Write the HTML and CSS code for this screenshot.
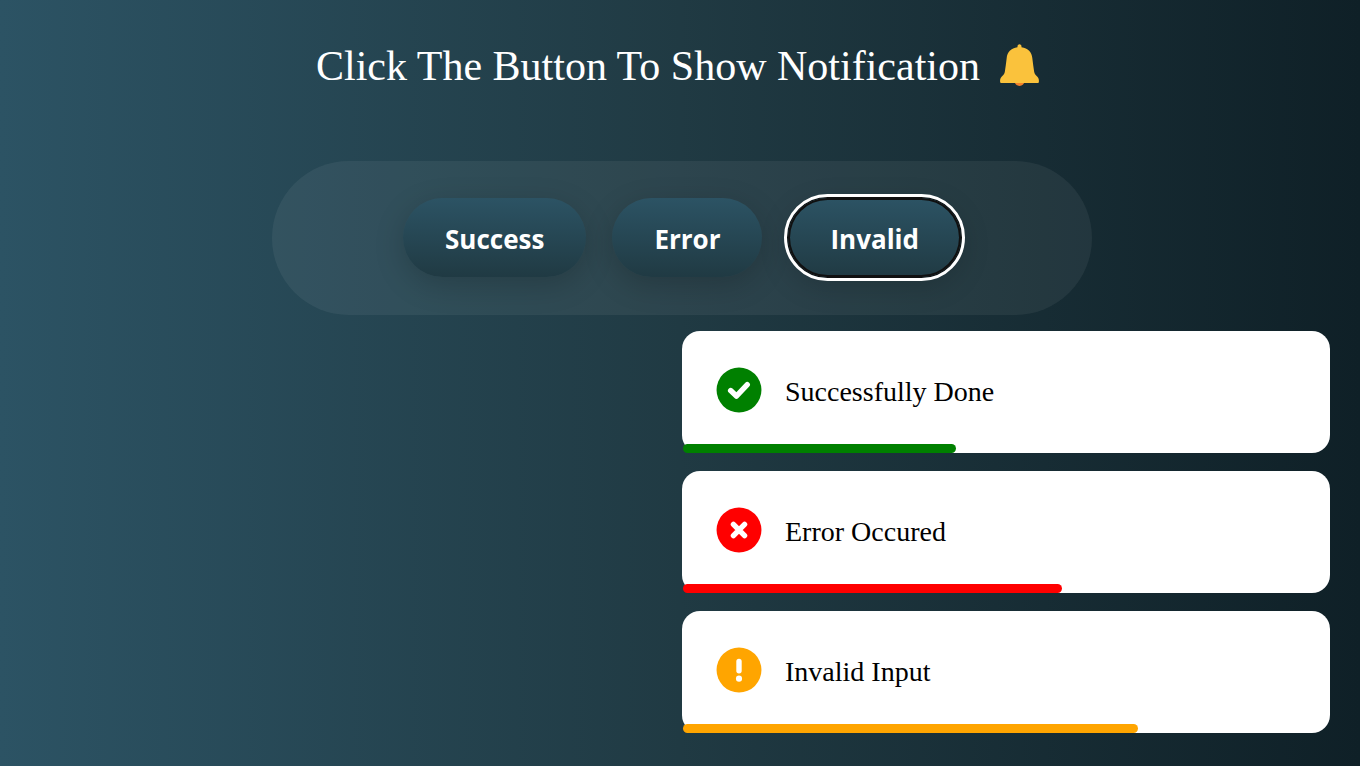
FILE: index.html
```html
<!DOCTYPE html>
<html lang="en">
<head>
<meta charset="utf-8">
<meta name="viewport" content="width=device-width, initial-scale=1">
<title>Toast Notification</title>
<link rel="stylesheet" href="styles.css">
</head>
<body>
<main class="page">
  <h1 class="title">
    <span>Click The Button To Show Notification</span>
    <svg class="bell" viewBox="0 0 40 44" aria-hidden="true">
      <path fill="#f4812a" d="M14.500 37a5 5 0 0 0 10 0z"/>
      <path fill="#fac23c" d="M19.500.3c1.200 0 2 .9 2 2.300v.7C28 4 31.800 8.500 32.300 14c.6 5 1.200 9.500 1.900 14 .4 2.300 1.900 3.300 3.200 4.800 1.400 1.500 1.600 3.200 1.500 4.900q0 1.300-1 1.300H1.100q-1 0-1-1.300c-.1-1.700.1-3.400 1.500-4.900C2.900 31.300 4.400 30.300 4.800 28 5.500 23.500 6.100 19 6.700 14 7.200 8.500 11 4 17.500 3.300v-.7c0-1.400.8-2.300 2-2.300z"/>
    </svg>
  </h1>
  <div class="buttons">
    <button type="button" class="btn">Success</button>
    <button type="button" class="btn">Error</button>
    <button type="button" class="btn btn-active">Invalid</button>
  </div>
  <section class="toasts" aria-live="polite">
    <div class="toast success">
      <svg class="icon" viewBox="0 0 512 512" aria-hidden="true"><circle cx="256" cy="256" r="250" fill="currentColor"/><path d="M163 262l64 61 121-126" class="mark"/></svg>
      <p class="message">Successfully Done</p>
    </div>
    <div class="toast error">
      <svg class="icon" viewBox="0 0 512 512" aria-hidden="true"><circle cx="256" cy="256" r="250" fill="currentColor"/><path d="M194 194l124 124M318 194L194 318" class="mark"/></svg>
      <p class="message">Error Occured</p>
    </div>
    <div class="toast invalid">
      <svg class="icon" viewBox="0 0 512 512" aria-hidden="true"><circle cx="256" cy="256" r="250" fill="currentColor"/><path d="M256 160v104" class="mark"/><circle cx="256" cy="352" r="34" fill="#fff"/></svg>
      <p class="message">Invalid Input</p>
    </div>
  </section>
</main>
</body>
</html>
```
FILE: styles.css
```css
* {
  box-sizing: border-box;
  margin: 0;
}

body {
  min-height: 100vh;
  background: linear-gradient(to right, #2c5364, #203a43, #0f2027);
  font-family: "Liberation Serif", "Times New Roman", serif;
}

.page {
  display: flex;
  flex-direction: column;
  align-items: center;
  padding: 42px 30px 33px;
}

.title {
  display: flex;
  align-items: center;
  gap: 20px;
  padding-right: 4px;
  color: #fff;
  font-size: 42px;
  font-weight: 400;
  line-height: 48px;
}

.bell {
  width: 40px;
  height: 44px;
}

.buttons {
  display: flex;
  justify-content: center;
  align-items: center;
  gap: 26px;
  width: 820px;
  max-width: 100%;
  margin: 71px 0 16px 4px;
  padding: 37px 0 38px;
  border-radius: 80px;
  background: rgba(255, 255, 255, 0.06);
}

.btn {
  padding: 21px 42px 18px;
  border: 0;
  border-radius: 40px;
  background: linear-gradient(to bottom, #2c5364, #203a43);
  box-shadow: 0 8px 30px rgba(0, 0, 0, 0.18);
  color: #fff;
  font: 700 26px/40px "Segoe UI", "Open Sans", "Noto Sans", sans-serif;
  cursor: pointer;
}

.btn-active,
.btn:focus-visible {
  outline: 3px solid #fff;
  outline-offset: 1px;
  box-shadow: 0 0 0 1px #101010, inset 0 0 0 2px #101010, 0 8px 30px rgba(0, 0, 0, 0.18);
}

.toasts {
  display: flex;
  flex-direction: column;
  align-self: flex-end;
  gap: 18px;
  width: 648px;
  max-width: 100%;
}

.toast {
  position: relative;
  display: flex;
  align-items: center;
  gap: 23px;
  padding: 36px 34px 40px;
  border-radius: 18px;
  background: #fff;
}

.toast::after {
  content: "";
  position: absolute;
  left: 1px;
  bottom: 0;
  height: 9px;
  border-radius: 5px;
  background: currentColor;
}

.success { color: green; }
.error { color: red; }
.invalid { color: orange; }

.success::after { width: 273px; }
.error::after { width: 379px; }
.invalid::after { width: 455px; }

.icon {
  width: 46px;
  height: 46px;
}

.mark {
  fill: none;
  stroke: #fff;
  stroke-width: 60px;
  stroke-linecap: round;
  stroke-linejoin: round;
}

.message {
  padding-top: 4px;
  color: #000;
  font-size: 28px;
  line-height: 42px;
}
```
